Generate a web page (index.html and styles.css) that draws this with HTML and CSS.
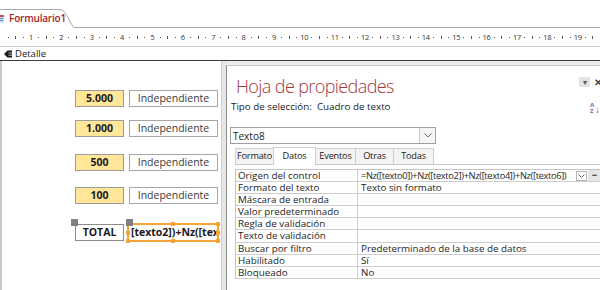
FILE: index.html
```html
<!DOCTYPE html>
<html lang="es">
<head>
<meta charset="utf-8">
<title>Formulario1</title>
<link rel="stylesheet" href="styles.css">
</head>
<body>
<div class="app">
  <div class="tabbar">
    <svg class="tabline" width="600" height="28" viewBox="0 0 600 28"><path d="M-1 9.5 H59 Q63 9.5 65 12.5 L73.5 27.5 H601" fill="none" stroke="#a9a9a9"/></svg>
    <svg class="docicon" width="5" height="8" viewBox="0 0 5 8"><rect x="0" y="0" width="5" height="8" fill="#d9e4f2"/><rect x="0" y="0" width="5" height="2" fill="#c0504d"/><rect x="0" y="3" width="4" height="1" fill="#4f81bd"/><rect x="0" y="5" width="4" height="1" fill="#4f81bd"/></svg>
    <span class="doctitle">Formulario1</span>
  </div>
  <div class="ruler">
    <i class="d"></i><i class="t"></i><i class="d"></i><b>1</b>
    <i class="d"></i><i class="t"></i><i class="d"></i><b>2</b>
    <i class="d"></i><i class="t"></i><i class="d"></i><b>3</b>
    <i class="d"></i><i class="t"></i><i class="d"></i><b>4</b>
    <i class="d"></i><i class="t"></i><i class="d"></i><b>5</b>
    <i class="d"></i><i class="t"></i><i class="d"></i><b>6</b>
    <i class="d"></i><i class="t"></i><i class="d"></i><b>7</b>
    <i class="d"></i><i class="t"></i><i class="d"></i><b>8</b>
    <i class="d"></i><i class="t"></i><i class="d"></i><b>9</b>
    <i class="d"></i><i class="t"></i><i class="d"></i><b>10</b>
    <i class="d"></i><i class="t"></i><i class="d"></i><b>11</b>
    <i class="d"></i><i class="t"></i><i class="d"></i><b>12</b>
    <i class="d"></i><i class="t"></i><i class="d"></i><b>13</b>
    <i class="d"></i><i class="t"></i><i class="d"></i><b>14</b>
    <i class="d"></i><i class="t"></i><i class="d"></i><b>15</b>
    <i class="d"></i><i class="t"></i><i class="d"></i><b>16</b>
    <i class="d"></i><i class="t"></i><i class="d"></i><b>17</b>
    <i class="d"></i><i class="t"></i><i class="d"></i><b>18</b>
    <i class="d"></i><i class="t"></i><i class="d"></i><b>19</b>
    <i class="d"></i><i class="t"></i>
  </div>
  <div class="section">
    <svg class="secicon" width="8" height="8" viewBox="0 0 8 8"><path d="M0 4 L3.5 0.5 H8 V7.5 H3.5 Z" fill="#1a1a1a"/><rect x="4.5" y="2.6" width="3.5" height="0.7" fill="#fff"/><rect x="4.5" y="4.8" width="3.5" height="0.7" fill="#fff"/></svg>
    <span>Detalle</span>
  </div>
  <div class="main">
    <div class="canvas">
      <div class="ctl val y1">5.000</div>
      <div class="ctl lbl y1">Independiente</div>
      <div class="ctl val y2">1.000</div>
      <div class="ctl lbl y2">Independiente</div>
      <div class="ctl val y3">500</div>
      <div class="ctl lbl y3">Independiente</div>
      <div class="ctl val y4">100</div>
      <div class="ctl lbl y4">Independiente</div>
      <div class="ctl total y5">TOTAL</div>
      <div class="sel">[texto2])+Nz([texto4])</div>
      <span class="h o tl"></span><span class="h o tm"></span><span class="h o tr"></span>
      <span class="h o ml"></span><span class="h o mr"></span>
      <span class="h o bl"></span><span class="h o bm"></span><span class="h o br"></span>
      <span class="g g1"></span><span class="g g2"></span>
      <div class="edge"></div>
    </div>
    <div class="props">
      <div class="phead">
        <h1 class="ptitle">Hoja de propiedades</h1>
        <div class="pbtns"><span class="pbtn">&#9662;</span><span class="pclose">&#10005;</span></div>
      </div>
      <div class="pinfo">
        <span>Tipo de selección:&nbsp; Cuadro de texto</span>
        <span class="sorticon"><span class="sa">A</span><span class="sz">Z</span><span class="sarr">&#8595;</span></span>
      </div>
      <div class="combo">
        <span class="ctext">Texto8</span>
        <span class="cbtn"><svg width="8" height="5" viewBox="0 0 8 5"><path d="M0.5 0.5 L4 4 L7.5 0.5" fill="none" stroke="#707070"/></svg></span>
      </div>
      <div class="tabs">
        <span class="tab">Formato</span>
        <span class="tab act">Datos</span>
        <span class="tab">Eventos</span>
        <span class="tab">Otras</span>
        <span class="tab">Todas</span>
      </div>
      <div class="grid">
        <div class="row"><span class="k">Origen del control</span><span class="v vsrc"><span class="vt">=Nz([texto0])+Nz([texto2])+Nz([texto4])+Nz([texto6])</span><span class="vdd"><svg width="7" height="4" viewBox="0 0 7 4"><path d="M0.5 0.5 L3.5 3.5 L6.5 0.5" fill="none" stroke="#606060"/></svg></span><span class="vdots">&middot;&middot;&middot;</span></span></div>
        <div class="row"><span class="k">Formato del texto</span><span class="v">Texto sin formato</span></div>
        <div class="row"><span class="k">Máscara de entrada</span><span class="v"></span></div>
        <div class="row"><span class="k">Valor predeterminado</span><span class="v"></span></div>
        <div class="row"><span class="k">Regla de validación</span><span class="v"></span></div>
        <div class="row"><span class="k">Texto de validación</span><span class="v"></span></div>
        <div class="row"><span class="k">Buscar por filtro</span><span class="v">Predeterminado de la base de datos</span></div>
        <div class="row"><span class="k">Habilitado</span><span class="v">Sí</span></div>
        <div class="row"><span class="k">Bloqueado</span><span class="v">No</span></div>
      </div>
    </div>
  </div>
</div>
</body>
</html>
```

FILE: styles.css
```css
* { box-sizing: border-box; }
html, body { margin: 0; padding: 0; }
body {
  width: 600px;
  height: 290px;
  overflow: hidden;
  background: #fff;
  font-family: "Open Sans", "Noto Sans", sans-serif;
  color: #1e1e1e;
}
.app { width: 600px; height: 290px; display: flex; flex-direction: column; overflow: hidden; }

/* document tab */
.tabbar {
  position: relative;
  height: 28px;
  flex: none;
  display: flex;
  align-items: center;
  padding-top: 8px;
  background: #fff;
}
.tabline { position: absolute; left: 0; top: 0; }
.docicon { margin-left: -1px; margin-top: 1px; }
.doctitle {
  margin-left: 5px;
  font-size: 10px;
  font-weight: 600;
  color: #a4262c;
  letter-spacing: -0.2px;
}

/* ruler */
.ruler {
  height: 19px;
  flex: none;
  display: flex;
  align-items: center;
  padding-left: 4.4px;
  border-bottom: 1px solid #c9c9c9;
  background: #fff;
  white-space: nowrap;
}
.ruler i, .ruler b {
  flex: none;
  width: 7.6px;
  display: flex;
  justify-content: center;
  align-items: center;
  height: 10px;
}
.ruler i::before { content: ""; display: block; background: #5a5a5a; }
.ruler i.d::before { width: 1px; height: 1px; }
.ruler i.t::before { width: 1px; height: 3px; }
.ruler b {
  font-weight: 400;
  font-size: 7.5px;
  color: #333;
  letter-spacing: -0.3px;
}

/* section bar */
.section {
  height: 14px;
  flex: none;
  display: flex;
  align-items: center;
  gap: 3px;
  padding-left: 4px;
  border-bottom: 1px solid #3c3c3c;
  background: #fff;
  font-size: 9.5px;
  color: #222;
}

/* main */
.main {
  flex: 1;
  display: flex;
  background: #ececec;
  min-height: 0;
}
.canvas {
  position: relative;
  width: 226px;
  flex: none;
  background: #fff;
  border-left: 2px solid #c8c8c8;
  overflow: hidden;
}
.edge {
  position: absolute;
  right: 0;
  top: 0;
  bottom: 0;
  width: 5px;
  background: #e6e6e6;
  border-left: 1px solid #d0d0d0;
}
.ctl {
  position: absolute;
  height: 17px;
  border: 1px solid #a6a6a6;
  font-size: 10.5px;
  line-height: 15px;
  text-align: center;
  white-space: nowrap;
}
.val { left: 73px; width: 49px; background: #ffe699; font-weight: 700; color: #1a1a1a; border-color: #9c9c9c; }
.lbl { left: 127px; width: 89px; background: #fff; color: #3a3a3a; }
.total { left: 73px; width: 49px; background: #fff; font-weight: 700; color: #1a1a1a; border-color: #8c8c8c; }
.y1 { top: 29px; }
.y2 { top: 59px; }
.y3 { top: 93px; }
.y4 { top: 126px; }
.y5 { top: 163px; height: 17px; }
.sel {
  position: absolute;
  left: 125px;
  top: 162px;
  width: 92px;
  height: 19px;
  border: 2px solid #f7a33a;
  background: #fff;
  font-size: 10.5px;
  font-weight: 700;
  line-height: 15px;
  padding-left: 2px;
  white-space: nowrap;
  overflow: hidden;
  color: #1a1a1a;
}
.h { position: absolute; width: 4px; height: 4px; background: #f7a33a; }
.tl { left: 124px; top: 161px; }
.tm { left: 169px; top: 161px; }
.tr { left: 214px; top: 161px; }
.ml { left: 124px; top: 169.5px; }
.mr { left: 214px; top: 169.5px; }
.bl { left: 124px; top: 178px; }
.bm { left: 169px; top: 178px; }
.br { left: 214px; top: 178px; }
.g { position: absolute; width: 7px; height: 7px; background: #808080; }
.g1 { left: 69px; top: 158px; }
.g2 { left: 124px; top: 158px; }

/* property sheet */
.props {
  flex: 1;
  margin-top: 4px;
  background: #fff;
  border-top: 1px solid #c6c6c6;
  border-left: 1px solid #8e8e8e;
  padding-left: 3px;
  display: flex;
  flex-direction: column;
  min-width: 0;
}
.phead {
  display: flex;
  justify-content: space-between;
  align-items: flex-start;
  height: 34px;
}
.ptitle {
  margin: 9px 0 0 6px;
  font-size: 18px;
  line-height: 23px;
  font-weight: 300;
  color: #a4373a;
  letter-spacing: -0.6px;
  white-space: nowrap;
}
.pbtns { display: flex; align-items: center; margin-top: 11px; gap: 4px; margin-right: 0; }
.pbtn {
  width: 11px; height: 10px;
  background: #e3e3e3;
  font-size: 8px; line-height: 10px; text-align: center; color: #555;
}
.pclose { font-size: 10px; line-height: 10px; color: #444; font-weight: 700; width: 6px; overflow: hidden; }
.pinfo {
  display: flex;
  justify-content: space-between;
  align-items: flex-start;
  height: 27px;
  font-size: 9.8px;
  line-height: 14px;
  padding-left: 1px;
  color: #222;
  white-space: nowrap;
}
.sorticon {
  position: relative;
  width: 10px;
  margin-top: 2px;
  margin-right: 0;
  height: 14px;
  font-size: 6px;
  line-height: 6px;
  font-weight: 700;
}
.sa { position: absolute; left: 0; top: 0; color: #4a7cc6; }
.sz { position: absolute; left: 0; top: 6px; color: #9b59b6; }
.sarr { position: absolute; left: 5px; top: 2px; font-size: 10px; line-height: 10px; color: #666; font-weight: 400; }
.combo {
  width: 206px;
  height: 17px;
  border: 1px solid #a0a0a0;
  display: flex;
  align-items: center;
  justify-content: space-between;
  font-size: 10px;
  padding-left: 2px;
  color: #1a1a1a;
}
.cbtn {
  width: 16px; height: 15px;
  border-left: 1px solid #c8c8c8;
  background: #f4f4f4;
  display: flex; align-items: center; justify-content: center;
}
.tabs {
  margin-top: 4px;
  margin-left: 5px;
  display: flex;
  align-items: flex-end;
  height: 17px;
  border-bottom: 1px solid #c8c8c8;
}
.tab {
  height: 16px;
  border: 1px solid #cfcfcf;
  border-bottom: none;
  margin-right: -1px;
  background: #f3f3f3;
  font-size: 9.2px;
  line-height: 14px;
  text-align: center;
  color: #222;
  letter-spacing: -0.2px;
  white-space: nowrap;
}
.tab:nth-child(1) { width: 39px; }
.tab:nth-child(2) { width: 43px; }
.tab:nth-child(3) { width: 41px; }
.tab:nth-child(4) { width: 39px; }
.tab:nth-child(5) { width: 41px; }
.tab.act { height: 18px; background: #fff; margin-bottom: -1px; line-height: 15px; }
.grid {
  margin-top: 4px;
  margin-left: 5px;
  border-top: 1px solid #c4c4c4;
  border-left: 1px solid #c4c4c4;
}
.row {
  display: flex;
  height: 12.1px;
  border-bottom: 1px solid #cdcdcd;
  font-size: 9.8px;
  line-height: 11px;
  white-space: nowrap;
  color: #1e1e1e;
}
.k { width: 122px; flex: none; padding-left: 2px; border-right: 1px solid #cdcdcd; overflow: hidden; }
.v { flex: 1; padding-left: 3px; overflow: hidden; min-width: 0; }
.vsrc { display: flex; align-items: center; }
.vt { flex: 1; overflow: hidden; font-size: 9.3px; letter-spacing: -0.35px; }
.vdd {
  width: 11px; height: 10px; flex: none;
  border: 1px solid #b5b5b5;
  background: #fff;
  display: flex; align-items: center; justify-content: center;
}
.vdots {
  width: 12px; height: 11px; flex: none;
  margin-left: 1px;
  background: #e6e6e6;
  font-size: 9px; line-height: 9px; font-weight: 700; text-align: center; color: #333;
  letter-spacing: -1px;
}
```
